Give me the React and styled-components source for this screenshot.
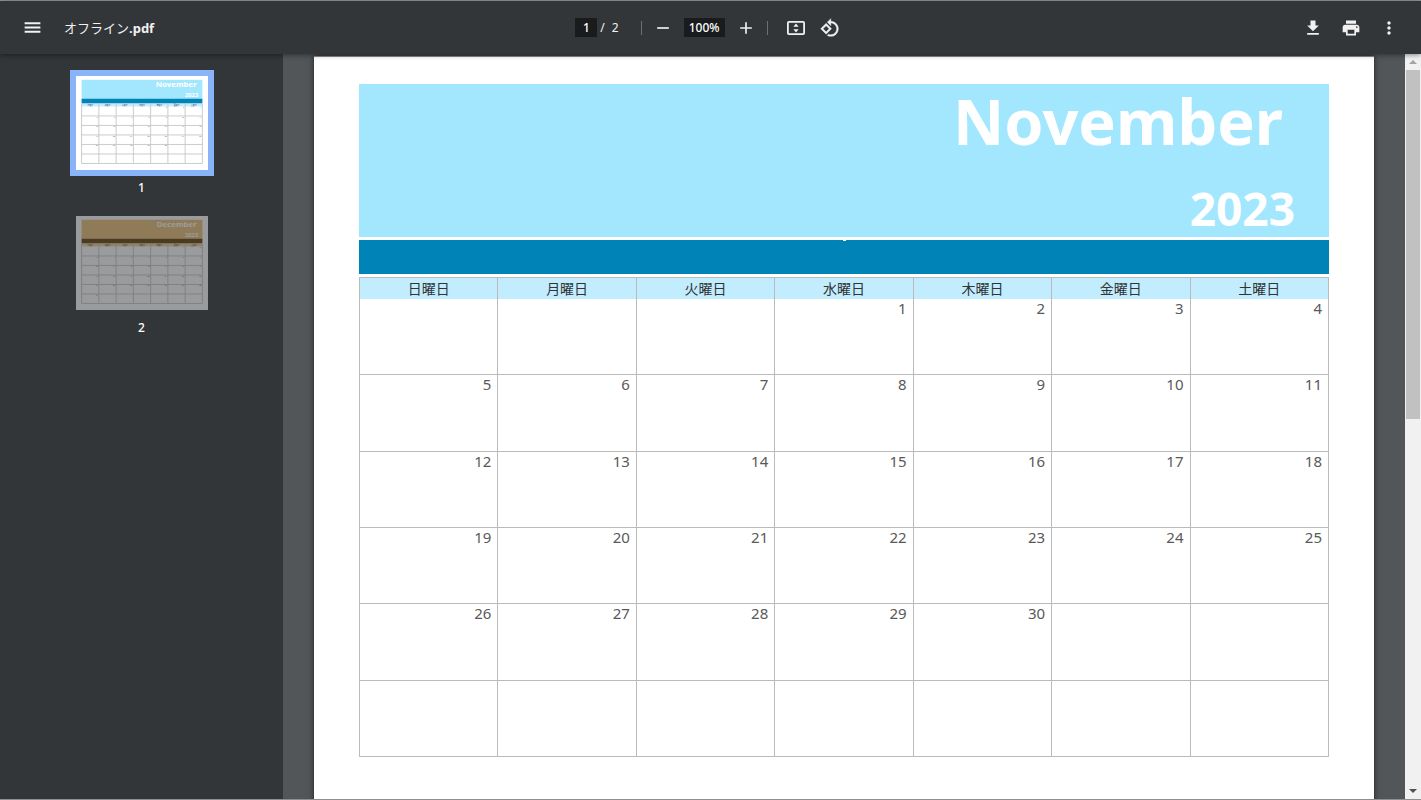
import React from 'react';
import styled, { createGlobalStyle } from 'styled-components';

const GlobalStyle = createGlobalStyle`
  * { box-sizing: border-box; }
  html, body { margin: 0; height: 100%; overflow: hidden; }
  body {
    font-family: 'Noto Sans', 'Noto Sans CJK JP', sans-serif;
    background: #525659;
  }
`;

const Viewer = styled.div`
  display: flex;
  flex-direction: column;
  height: 100vh;
  border-top: 1px solid #93999c;
  border-bottom: 1px solid #8c908e;
`;

const Toolbar = styled.header`
  display: flex;
  align-items: center;
  position: relative;
  z-index: 1;
  flex: 0 0 auto;
  height: 53px;
  padding: 0 16px;
  background: #323639;
  color: #f1f1f1;
  box-shadow: 0 1px 5px rgba(0, 0, 0, 0.45);
`;

const ToolbarSide = styled.div`
  display: flex;
  flex: 1 1 0;
  align-items: center;
  justify-content: ${(p) => (p.$end ? 'flex-end' : 'flex-start')};
  gap: ${(p) => (p.$end ? '6px' : '16px')};
`;

const ToolbarCenter = styled.div`
  display: flex;
  align-items: center;
`;

const ViewTools = styled.div`
  display: flex;
  gap: 2px;
`;

const FileName = styled.h1`
  margin: 0;
  font-size: 13px;
  line-height: 20px;
  font-weight: 400;
  white-space: nowrap;
`;

const Extension = styled.span`
  font-weight: 700;
`;

const IconButton = styled.button`
  display: flex;
  align-items: center;
  justify-content: center;
  width: 32px;
  height: 32px;
  padding: 0;
  border: 0;
  border-radius: 50%;
  background: transparent;
  color: #f1f1f1;
  cursor: pointer;
`;

const Field = styled.input`
  width: ${(p) => p.$width}px;
  height: 19px;
  margin: 0 ${(p) => p.$gap}px;
  padding: 0;
  border: 0;
  background: #191b1c;
  color: #fff;
  font: 500 12px/19px 'Noto Sans', sans-serif;
  text-align: center;
`;

const PageCount = styled.span`
  display: flex;
  gap: 7px;
  padding-left: 3px;
  font-size: 12px;
  line-height: 20px;
`;

const Divider = styled.span`
  width: 1px;
  height: 14px;
  margin: 0 ${(p) => p.$after}px 0 ${(p) => p.$before}px;
  background: #6b6f72;
`;

const Body = styled.div`
  display: flex;
  flex: 1 1 0;
  min-height: 0;
`;

const Sidebar = styled.nav`
  display: flex;
  flex-direction: column;
  align-items: center;
  flex: 0 0 283px;
  padding-top: 16px;
  background: #323639;
`;

const ThumbButton = styled.button`
  display: flex;
  padding: 0;
  border: 6px solid ${(p) => (p.$active ? '#8ab4f8' : 'transparent')};
  background: transparent;
  cursor: pointer;

  svg {
    display: block;
    background: #fff;
    opacity: ${(p) => (p.$active ? 1 : 0.5)};
  }
`;

const ThumbLabel = styled.span`
  height: 34px;
  padding-top: 2px;
  font-size: 12px;
  line-height: 20px;
  font-weight: 500;
  color: #fff;
`;

const Canvas = styled.main`
  flex: 1 1 0;
  min-width: 0;
  padding: 2px 31px 0;
  overflow: hidden;
  background: #525659;
`;

const Sheet = styled.article`
  min-height: 750px;
  padding: 27px 45px 50px;
  border-top: 1px solid #8a8a8a;
  background: #fff;
  box-shadow: 0 0 6px rgba(0, 0, 0, 0.6);
`;

const Banner = styled.div`
  display: flex;
  flex-direction: column;
  align-items: flex-end;
  justify-content: space-between;
  height: 153px;
  background: #a3e7ff;
  color: #fff;
  font-weight: 700;
`;

const Month = styled.div`
  padding-right: 46px;
  font-size: 63px;
  line-height: 74px;
`;

const Year = styled.div`
  padding-right: 34px;
  font-size: 46px;
  line-height: 58px;
`;

const Strip = styled.div`
  display: flex;
  justify-content: center;
  height: 34px;
  margin: 3px 0;
  background: #0083b7;

  &::before {
    content: '';
    width: 3px;
    height: 1px;
    background: #fff;
  }
`;

const CalendarTable = styled.table`
  width: 100%;
  height: 480px;
  table-layout: fixed;
  border-collapse: collapse;
  border: 1px solid #bbb;
`;

const Weekday = styled.th`
  height: 21px;
  padding: 0;
  border-left: 1px solid #bbb;
  background: #c1edff;
  color: #333;
  font: 400 14px/19px 'Noto Sans CJK JP', sans-serif;
`;

const DayCell = styled.td`
  height: 76px;
  padding: 1px 6px 0;
  border-left: 1px solid #bbb;
  border-bottom: 1px solid #bbb;
  color: #595959;
  font-size: 15px;
  line-height: 17px;
  text-align: right;
  vertical-align: top;
`;

const Scrollbar = styled.div`
  display: flex;
  flex-direction: column;
  align-items: center;
  flex: 0 0 16px;
  background: #f1f1f1;
`;

const ScrollArrow = styled.svg`
  flex: 0 0 16px;
  width: 16px;
`;

const ScrollTrack = styled.div`
  flex: 1 1 0;
  width: 14px;
`;

const ScrollThumb = styled.div`
  height: 49%;
  background: #c1c1c1;
`;

const WEEKDAYS = ['日曜日', '月曜日', '火曜日', '水曜日', '木曜日', '金曜日', '土曜日'];

const monthGrid = (firstDay, days) =>
  Array.from({ length: 6 }, (_, r) =>
    Array.from({ length: 7 }, (_, c) => {
      const n = r * 7 + c - firstDay + 1;
      return n > 0 && n <= days ? n : null;
    })
  );

const NOVEMBER = {
  name: 'November', rows: monthGrid(3, 30),
  banner: '#a3e7ff', strip: '#0083b7', head: '#c1edff',
};
const DECEMBER = {
  name: 'December', rows: monthGrid(5, 31),
  banner: '#ecc077', strip: '#644008', head: '#f3cf95',
};

const ICONS = {
  menu: 'M3 18h18v-2.4H3V18zm0-4.8h18v-2.4H3v2.4zM3 6v2.4h18V6H3z',
  minus: 'M19 13H5v-2h14v2z',
  plus: 'M19 13h-6v6h-2v-6H5v-2h6V5h2v6h6v2z',
  rotate:
    'M7.34 6.41L.86 12.9l6.49 6.48 6.49-6.48-6.5-6.49zM3.69 12.9l3.66-3.66L11 12.9l-3.66 3.66-3.65-3.66zm15.67-6.26C17.61 4.88 15.3 4 13 4V.76L8.76 5 13 9.24V6c1.79 0 3.58.68 4.95 2.05 2.73 2.73 2.73 7.17 0 9.9C16.58 19.32 14.79 20 13 20c-.97 0-1.94-.21-2.84-.61l-1.49 1.49C10.02 21.62 11.51 22 13 22c2.3 0 4.61-.88 6.36-2.64 3.52-3.51 3.52-9.21 0-12.72z',
  download: 'M19 9h-4V3H9v6H5l7 7 7-7zM5 18v2h14v-2H5z',
  print:
    'M19 8H5c-1.66 0-3 1.34-3 3v6h4v4h12v-4h4v-6c0-1.66-1.34-3-3-3zm-3 11H8v-5h8v5zm3-7c-.55 0-1-.45-1-1s.45-1 1-1 1 .45 1 1-.45 1-1 1zm-1-9H6v4h12V3z',
  more:
    'M12 8c1.1 0 2-.9 2-2s-.9-2-2-2-2 .9-2 2 .9 2 2 2zm0 2c-1.1 0-2 .9-2 2s.9 2 2 2 2-.9 2-2-.9-2-2-2zm0 6c-1.1 0-2 .9-2 2s.9 2 2 2 2-.9 2-2-.9-2-2-2z',
};

function Tool({ icon, label, size = 20, bold = false }) {
  return (
    <IconButton type="button" aria-label={label}>
      <svg width={size} height={size} viewBox="0 0 24 24" fill="currentColor">
        <path d={ICONS[icon]} stroke={bold ? 'currentColor' : 'none'} strokeWidth="0.5" />
      </svg>
    </IconButton>
  );
}

function FitTool() {
  return (
    <IconButton type="button" aria-label="ページに合わせる">
      <svg width="18" height="14" viewBox="0 0 18 14" fill="currentColor">
        <rect x="0.9" y="0.9" width="16.2" height="12.2" rx="1" fill="none" stroke="currentColor" strokeWidth="1.8" />
        <path d="M9 2.6L11.6 5.8H6.4zM9 11.4L6.4 8.2h5.2z" />
      </svg>
    </IconButton>
  );
}

function Thumbnail({ month }) {
  const colX = (c) => 45 + (c * 970) / 7;
  const rowY = (r) => 242 + (r * 458) / 6;
  return (
    <svg width="132" height="94" viewBox="0 0 1060 750" fontFamily="'Noto Sans', 'Noto Sans CJK JP', sans-serif">
      <rect x="45" y="28" width="970" height="153" fill={month.banner} />
      <text x="969" y="89" fontSize="63" fontWeight="700" fill="#fff" textAnchor="end">{month.name}</text>
      <text x="981" y="169" fontSize="46" fontWeight="700" fill="#fff" textAnchor="end">2023</text>
      <rect x="45" y="180" width="970" height="38" fill={month.strip} />
      <rect x="45" y="220" width="970" height="22" fill={month.head} />
      {WEEKDAYS.map((d, c) => (
        <text key={d} x={colX(c + 0.5)} y="237" fontSize="15" fill="#222" textAnchor="middle">{d}</text>
      ))}
      <g stroke="#c4c4c4" strokeWidth="7">
        {Array.from({ length: 8 }, (_, c) => (
          <line key={c} x1={colX(c)} x2={colX(c)} y1="220" y2="700" />
        ))}
        {Array.from({ length: 6 }, (_, r) => (
          <line key={r} x1="45" x2="1015" y1={rowY(r + 1)} y2={rowY(r + 1)} />
        ))}
      </g>
      {month.rows.map((row, r) =>
        row.map((n, c) =>
          n ? (
            <text key={n} x={colX(c + 1) - 8} y={rowY(r) + 16} fontSize="15" fill="#595959" textAnchor="end">{n}</text>
          ) : null
        )
      )}
    </svg>
  );
}

function Calendar({ month }) {
  return (
    <Sheet>
      <Banner>
        <Month>{month.name}</Month>
        <Year>2023</Year>
      </Banner>
      <Strip />
      <CalendarTable>
        <thead>
          <tr>
            {WEEKDAYS.map((d) => (
              <Weekday key={d} scope="col">{d}</Weekday>
            ))}
          </tr>
        </thead>
        <tbody>
          {month.rows.map((row, r) => (
            <tr key={r}>
              {row.map((n, c) => (
                <DayCell key={c}>{n}</DayCell>
              ))}
            </tr>
          ))}
        </tbody>
      </CalendarTable>
    </Sheet>
  );
}

export default function App() {
  return (
    <>
      <GlobalStyle />
      <Viewer>
        <Toolbar>
          <ToolbarSide>
            <Tool icon="menu" label="メニュー" size={21} />
            <FileName>オフライン<Extension>.pdf</Extension></FileName>
          </ToolbarSide>
          <ToolbarCenter>
            <Field $width={22} $gap={0} aria-label="ページ番号" defaultValue="1" />
            <PageCount><span>/</span><span>2</span></PageCount>
            <Divider $before={22} $after={5} />
            <Tool icon="minus" label="縮小" />
            <Field $width={41} $gap={5} aria-label="ズームレベル" defaultValue="100%" />
            <Tool icon="plus" label="拡大" />
            <Divider $before={5} $after={12} />
            <ViewTools>
              <FitTool />
              <Tool icon="rotate" label="反時計回りに回転" bold />
            </ViewTools>
          </ToolbarCenter>
          <ToolbarSide $end>
            <Tool icon="download" label="ダウンロード" />
            <Tool icon="print" label="印刷" />
            <Tool icon="more" label="その他の操作" />
          </ToolbarSide>
        </Toolbar>
        <Body>
          <Sidebar aria-label="サムネイル">
            <ThumbButton type="button" $active aria-label="ページ 1">
              <Thumbnail month={NOVEMBER} />
            </ThumbButton>
            <ThumbLabel>1</ThumbLabel>
            <ThumbButton type="button" aria-label="ページ 2">
              <Thumbnail month={DECEMBER} />
            </ThumbButton>
            <ThumbLabel>2</ThumbLabel>
          </Sidebar>
          <Canvas>
            <Calendar month={NOVEMBER} />
          </Canvas>
          <Scrollbar aria-hidden="true">
            <ScrollArrow height="16" viewBox="0 0 16 16"><path d="M8 6l4 4H4z" fill="#a3a3a3" /></ScrollArrow>
            <ScrollTrack><ScrollThumb /></ScrollTrack>
            <ScrollArrow height="16" viewBox="0 0 16 16"><path d="M8 10L4 6h8z" fill="#505050" /></ScrollArrow>
          </Scrollbar>
        </Body>
      </Viewer>
    </>
  );
}
